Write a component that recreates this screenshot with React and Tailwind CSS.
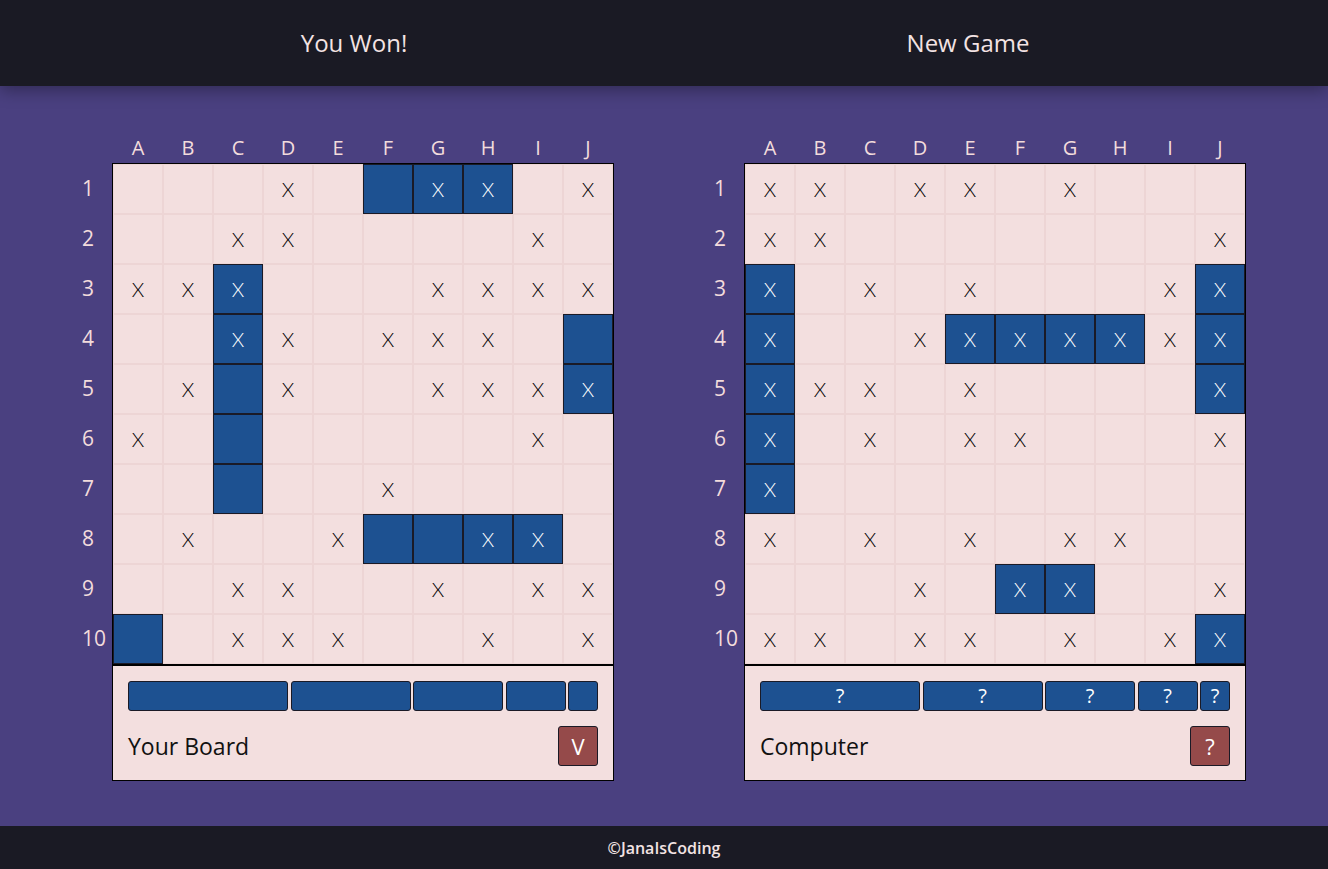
import React from 'react';

const COLS = ['A', 'B', 'C', 'D', 'E', 'F', 'G', 'H', 'I', 'J'];

// s = ship, x = hit/miss mark, S = ship with mark, . = empty
const playerBoard = [
  '...x.sSS.x',
  '..xx....x.',
  'xxS...xxxx',
  '..Sx.xxx.s',
  '.xsx..xxxS',
  'x.s.....x.',
  '..s..x....',
  '.x..xssSS.',
  '..xx..x.xx',
  's.xxx..x.x',
];

const computerBoard = [
  'xx.xx.x...',
  'xx.......x',
  'S.x.x...xS',
  'S..xSSSSxS',
  'Sxx.x....S',
  'S.x.xx...x',
  'S.........',
  'x.x.x.xx..',
  '...x.SS..x',
  'xx.xx.x.xS',
];

const shipWidths = [160, 120, 90, 60, 30];

const Cell = ({ v }) => {
  const ship = v === 's' || v === 'S';
  const mark = v === 'x' || v === 'S';
  return (
    <div
      className={`w-[50px] h-[50px] flex items-center justify-center border ${
        ship ? 'bg-[#1d5191] border-[#1a1a26]' : 'border-[#edd5d5]'
      }`}
    >
      {mark && (
        <span
          className={`font-['Lato',sans-serif] font-light text-[20px] leading-none ${
            ship ? 'text-white' : 'text-black'
          }`}
        >
          X
        </span>
      )}
    </div>
  );
};

const Board = ({ rows, title, button, hidden }) => (
  <div className="flex flex-col">
    {/* column letters */}
    <div className="flex pl-[33px] h-[29px] items-start">
      {COLS.map((c) => (
        <div key={c} className="w-[50px] text-center text-[20px] leading-[28px] text-[#f3dcdc]">
          {c}
        </div>
      ))}
    </div>
    <div className="flex">
      {/* row numbers */}
      <div className="w-[32px] pt-[1px] flex flex-col">
        {rows.map((_, i) => (
          <div key={i} className="h-[50px] flex items-center pl-[2px] text-[21px] text-[#f3dcdc]">
            {i + 1}
          </div>
        ))}
      </div>
      <div className="w-[502px] border border-black bg-[#f3dfdf]">
        <div className="flex flex-col">
          {rows.map((r, i) => (
            <div key={i} className="flex">
              {r.split('').map((v, j) => (
                <Cell key={j} v={v} />
              ))}
            </div>
          ))}
        </div>
        <div className="border-t-2 border-black px-[15px] pt-[15px] pb-[14px]">
          <div className="flex gap-[2.5px] h-[30px]">
            {shipWidths.map((w, i) => (
              <div
                key={i}
                style={{ width: w }}
                className="h-[30px] bg-[#1d5191] border border-[#1a1a26] rounded-[3px] flex items-center justify-center text-white text-[20px] leading-none"
              >
                {hidden ? '?' : ''}
              </div>
            ))}
          </div>
          <div className="flex items-center justify-between mt-[15px]">
            <span className="text-[23px] text-[#111]">{title}</span>
            <div className="w-[40px] h-[40px] bg-[#954a4a] border border-[#1a1a26] rounded-[3px] flex items-center justify-center text-white text-[22px]">
              {button}
            </div>
          </div>
        </div>
      </div>
    </div>
  </div>
);

export default function App() {
  return (
    <div className="w-[1328px] h-[869px] flex flex-col bg-[#4a4080] font-['Open_Sans','Noto_Sans',sans-serif] overflow-hidden">
      <header className="h-[86px] shrink-0 bg-[#1a1a24] grid grid-cols-[708px_520px] items-center text-[24px] text-[#f3e3e3] shadow-[0_4px_16px_rgba(0,0,0,0.35)] relative z-10">
        <div className="text-center">You Won!</div>
        <div className="text-center">New Game</div>
      </header>
      <main className="h-[740px] shrink-0 flex pl-[80px] gap-[98px] pt-[48px]">
        <Board rows={playerBoard} title="Your Board" button="V" />
        <Board rows={computerBoard} title="Computer" button="?" hidden />
      </main>
      <footer className="flex-1 bg-[#1a1a24] flex items-center justify-center text-[16px] font-semibold text-[#f3e3e3]">
        ©JanaIsCoding
      </footer>
    </div>
  );
}
